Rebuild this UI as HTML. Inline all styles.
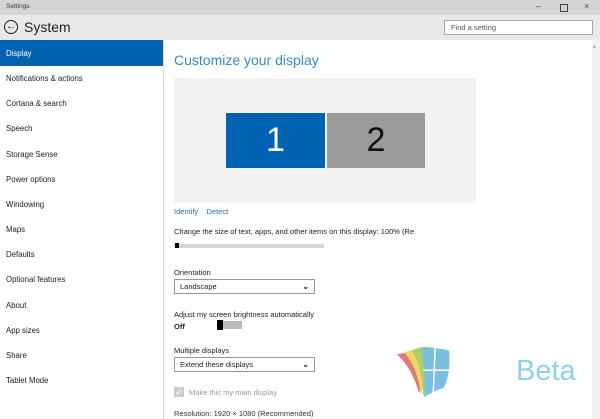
<!DOCTYPE html>
<html><head><style>
body{margin:0;width:600px;height:419px;overflow:hidden;font-family:"Liberation Sans",sans-serif;background:#fff;position:relative}
.a{position:absolute}
.nav div{position:absolute;left:6px;font-size:7.8px;color:#222}
.t{font-size:7.5px;color:#222}
.sel{position:absolute;border:1px solid #999;width:141px;height:15px;font-size:7.5px;line-height:14px;padding-left:5px;box-sizing:border-box;color:#222}
.sel span{position:absolute;right:5px;top:0;font-size:8px;font-weight:bold}
</style></head><body>
<div class="a" style="left:0;top:0;width:600px;height:15px;background:#d4d4d4"></div>
<div class="a" style="left:6px;top:3px;font-size:6.5px;color:#333">Settings</div>
<div class="a" style="left:536px;top:1px;font-size:9px;color:#444">–</div>
<div class="a" style="left:560px;top:4px;width:6px;height:6px;border:1px solid #444"></div>
<div class="a" style="left:584px;top:1px;font-size:9px;color:#444">×</div>
<div class="a" style="left:0;top:15px;width:600px;height:25px;background:#e9e9e9"></div>
<div class="a" style="left:4px;top:20px;width:12px;height:12px;border:1.5px solid #222;border-radius:50%;font-size:10px;line-height:12px;text-align:center;color:#222">←</div>
<div class="a" style="left:24px;top:19px;font-size:14px;color:#222">System</div>
<div class="a" style="left:444px;top:20px;width:149px;height:15px;border:1px solid #aaa;background:#fff;box-sizing:border-box;font-size:7.5px;line-height:13px;padding-left:6px;color:#555">Find a setting</div>
<div class="a" style="left:0;top:40px;width:163px;height:26px;background:#0063b1"></div>
<div class="a" style="left:163px;top:40px;width:1px;height:379px;background:#ddd"></div>
<div class="nav">
<div style="top:49px;color:#fff">Display</div>
<div style="top:74px">Notifications &amp; actions</div>
<div style="top:99px">Cortana &amp; search</div>
<div style="top:124px">Speech</div>
<div style="top:150px">Storage Sense</div>
<div style="top:175px">Power options</div>
<div style="top:200px">Windowing</div>
<div style="top:225px">Maps</div>
<div style="top:250px">Defaults</div>
<div style="top:275px">Optional features</div>
<div style="top:301px">About</div>
<div style="top:326px">App sizes</div>
<div style="top:351px">Share</div>
<div style="top:376px">Tablet Mode</div>
</div>
<div class="a" style="left:592px;top:40px;width:8px;height:379px;background:#f0f0f0"></div>
<div class="a" style="left:593px;top:46px;font-size:6px;color:#555">^</div>
<div class="a" style="left:174px;top:52px;font-size:14px;color:#3a88c8">Customize your display</div>
<div class="a" style="left:174px;top:78px;width:302px;height:125px;background:#f2f2f2"></div>
<div class="a" style="left:226px;top:113px;width:99px;height:55px;background:#0063b1;color:#fff;font-size:34px;line-height:55px;text-align:center;font-weight:300">1</div>
<div class="a" style="left:327px;top:113px;width:98px;height:55px;background:#9b9b9b;color:#111;font-size:34px;line-height:55px;text-align:center">2</div>
<div class="a" style="left:174px;top:207px;font-size:7.5px;color:#1f6fb5">Identify&nbsp;&nbsp;&nbsp;&nbsp;Detect</div>
<div class="a t" style="left:174px;top:227px">Change the size of text, apps, and other items on this display: 100% (Re</div>
<div class="a" style="left:174px;top:244px;width:150px;height:4px;background:#d6d6d6"></div>
<div class="a" style="left:175px;top:243px;width:4px;height:5px;background:#000"></div>
<div class="a t" style="left:174px;top:268px">Orientation</div>
<div class="sel" style="left:174px;top:279px">Landscape<span>⌄</span></div>
<div class="a t" style="left:174px;top:310px">Adjust my screen brightness automatically</div>
<div class="a t" style="left:174px;top:322px;font-weight:bold">Off</div>
<div class="a" style="left:217px;top:321px;width:25px;height:8px;background:#bbb"></div>
<div class="a" style="left:217px;top:320px;width:6px;height:10px;background:#000"></div>
<div class="a t" style="left:174px;top:346px">Multiple displays</div>
<div class="sel" style="left:174px;top:357px">Extend these displays<span>⌄</span></div>
<div class="a" style="left:174px;top:387px;width:10px;height:10px;background:#ccc;color:#fff;font-size:9px;line-height:10px;text-align:center">✓</div>
<div class="a t" style="left:189px;top:388px;color:#999">Make this my main display</div>
<div class="a t" style="left:174px;top:409px;color:#333">Resolution: 1920 × 1080 (Recommended)</div>
<svg class="a" style="left:390px;top:345px" width="66" height="56" viewBox="0 0 60 60">
<path d="M2 10 Q20 6 34 10 L26 52 Q18 24 2 10Z" fill="#e0787a"/>
<path d="M10 8 Q24 2 38 6 L28 54 Q24 24 10 8Z" fill="#f4d264"/>
<path d="M18 6 Q28 0 42 3 L30 56 Q30 24 18 6Z" fill="#a6cf6e"/>
<path d="M28 4 Q44 2 58 6 Q60 32 52 46 Q40 50 31 56 Q34 30 28 4Z" fill="#7bbfe0"/>
<path d="M43 3 L41 52 M30 27 L58 27" stroke="#fff" stroke-width="1.5" fill="none"/>
</svg>
<div class="a" style="left:516px;top:355px;font-size:29px;color:#8fd0ea;font-weight:300">Beta</div>
</body></html>
